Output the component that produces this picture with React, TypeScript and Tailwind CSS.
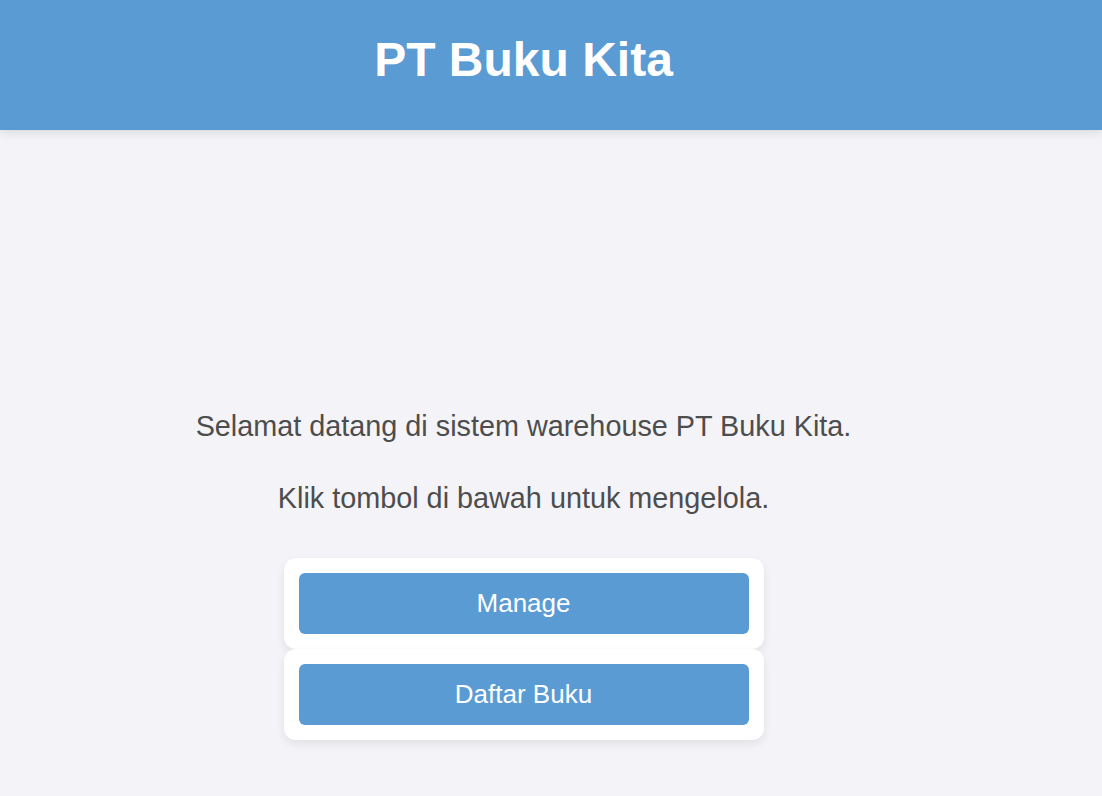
export default function App() {
  return (
    <div
      className="min-h-[796px] bg-[#f4f4f8] text-[#4d4d4d]"
      style={{ fontFamily: '"Liberation Sans", Arial, sans-serif' }}
    >
      {/* Header */}
      <header className="h-[130px] bg-[#5b9bd4] shadow-[0_2px_10px_rgba(0,0,0,0.12)] pr-[55px]">
        <h1 className="pt-[33px] text-center text-[48px] font-bold leading-[54px] text-white">
          PT Buku Kita
        </h1>
      </header>

      {/* Content */}
      <main className="flex flex-col items-center pr-[55px] pt-[280px]">
        <p className="text-[28.8px] leading-[33px]">
          Selamat datang di sistem warehouse PT Buku Kita.
        </p>
        <p className="mt-[39px] text-[28.8px] leading-[33px]">
          Klik tombol di bawah untuk mengelola.
        </p>

        <div className="mt-[43px] flex flex-col">
          {["Manage", "Daftar Buku"].map((label) => (
            <div
              key={label}
              className="w-[480px] rounded-xl bg-white p-[15px] shadow-[0_4px_10px_rgba(0,0,0,0.08)]"
            >
              <button className="h-[61px] w-full rounded-md bg-[#5b9bd4] text-[26px] text-white">
                {label}
              </button>
            </div>
          ))}
        </div>
      </main>
    </div>
  )
}
